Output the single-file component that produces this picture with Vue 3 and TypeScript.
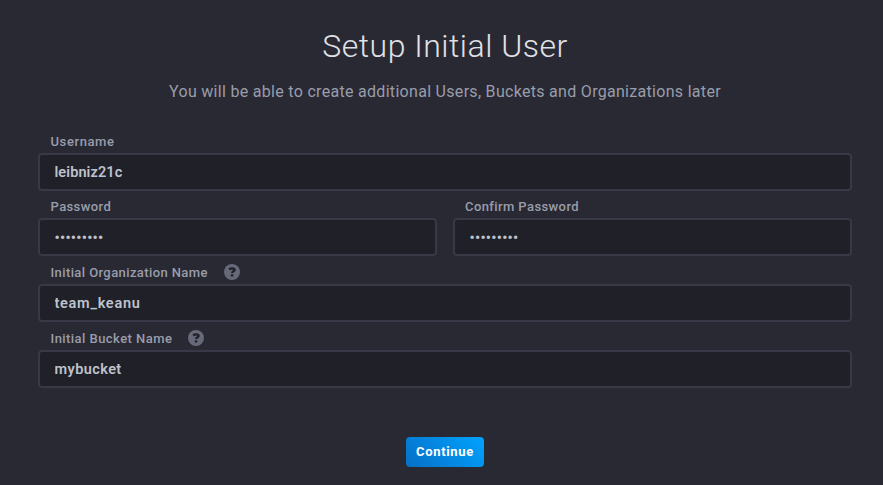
<script setup lang="ts">
import { ref } from 'vue'

interface Field {
  id: string
  label: string
  type: 'text' | 'password'
  value: string
  half?: boolean
  help?: boolean
}

const fields = ref<Field[]>([
  { id: 'username', label: 'Username', type: 'text', value: 'leibniz21c' },
  { id: 'password', label: 'Password', type: 'password', value: 'password1', half: true },
  { id: 'confirm', label: 'Confirm Password', type: 'password', value: 'password1', half: true },
  { id: 'org', label: 'Initial Organization Name', type: 'text', value: 'team_keanu', help: true },
  { id: 'bucket', label: 'Initial Bucket Name', type: 'text', value: 'mybucket', help: true },
])
</script>

<template>
  <main class="wizard">
    <h1 class="title">Setup Initial User</h1>
    <p class="subtitle">You will be able to create additional Users, Buckets and Organizations later</p>
    <form class="form" @submit.prevent>
      <div v-for="f in fields" :key="f.id" class="field" :class="[f.id, { half: f.half }]">
        <div class="label-row">
          <label :for="f.id" class="label">{{ f.label }}</label>
          <svg v-if="f.help" class="help" viewBox="0 0 16 16" aria-hidden="true">
            <circle cx="8" cy="8" r="8" fill="#676978" />
            <path d="M5 5.1C6 4.6 7 4.3 8.2 4.3c1.6 0 2.4.6 2.4 1.6 0 1.5-2.5 1.2-2.5 3.2" fill="none" stroke="#202028" stroke-width="2.3" />
            <rect x="6.8" y="10.2" width="2.5" height="2.3" rx=".5" fill="#202028" />
          </svg>
        </div>
        <input :id="f.id" v-model="f.value" class="input" :type="f.type" autocomplete="off" spellcheck="false" />
      </div>
      <button class="continue" type="submit">Continue</button>
    </form>
  </main>
</template>

<style>
body {
  margin: 0;
  background: #292933;
}
</style>

<style scoped>
.wizard {
  box-sizing: border-box;
  width: 883px;
  height: 485px;
  padding: 26px 31px 0 38px;
  overflow: hidden;
  background: #292933;
  font-family: Roboto, "Liberation Sans", sans-serif;
}
.title {
  margin: 0;
  height: 40px;
  line-height: 40px;
  text-align: center;
  font-size: 32px;
  font-weight: 300;
  letter-spacing: 0.5px;
  color: #e0e1e6;
}
.subtitle {
  margin: 16px 0 0;
  height: 20px;
  line-height: 20px;
  text-align: center;
  font-size: 16px;
  letter-spacing: 0.3px;
  color: #999dab;
}
.form {
  margin-top: 29px;
  display: grid;
  grid-template-columns: 1fr 1fr;
  column-gap: 16px;
}
.field {
  grid-column: span 2;
}
.field.half {
  grid-column: span 1;
}
.label-row {
  display: flex;
  align-items: center;
  gap: 16px;
  height: 22px;
  padding-left: 12.5px;
}
.half .label-row {
  height: 27px;
}
.confirm .label-row {
  padding-left: 12px;
}
.org .label-row,
.bucket .label-row {
  height: 28px;
}
.half .label {
  padding-top: 4px;
}
.org .label,
.bucket .label {
  padding-top: 6px;
}
.label {
  font-size: 13px;
  line-height: 20px;
  font-weight: 500;
  letter-spacing: 0.4px;
  color: #999dab;
  white-space: nowrap;
}
.username .label {
  letter-spacing: 0.6px;
}
.bucket .label {
  letter-spacing: 0.45px;
}
.help {
  width: 16px;
  height: 16px;
  margin-top: 4px;
}
.input {
  box-sizing: border-box;
  display: block;
  width: 100%;
  height: 38px;
  margin: 0;
  padding: 0 14px 0 14.5px;
  border: 2px solid #383846;
  border-radius: 4px;
  outline: none;
  background: #202028;
  color: #bec2cc;
  font: 600 14.5px Roboto, "Liberation Sans", sans-serif;
  letter-spacing: 0.1px;
}
.half .input {
  padding-top: 2px;
  letter-spacing: 0.3px;
}
.org .input {
  letter-spacing: 0.72px;
}
.bucket .input {
  letter-spacing: 0.42px;
}
.continue {
  grid-column: span 2;
  justify-self: center;
  width: 78px;
  height: 30px;
  margin-top: 49px;
  padding: 0 0 2px;
  border: 0;
  border-radius: 4px;
  background: linear-gradient(45deg, #066fc5, #00a3ff);
  color: #fff;
  font: 700 13px Roboto, "Liberation Sans", sans-serif;
  letter-spacing: 0.65px;
}
</style>
